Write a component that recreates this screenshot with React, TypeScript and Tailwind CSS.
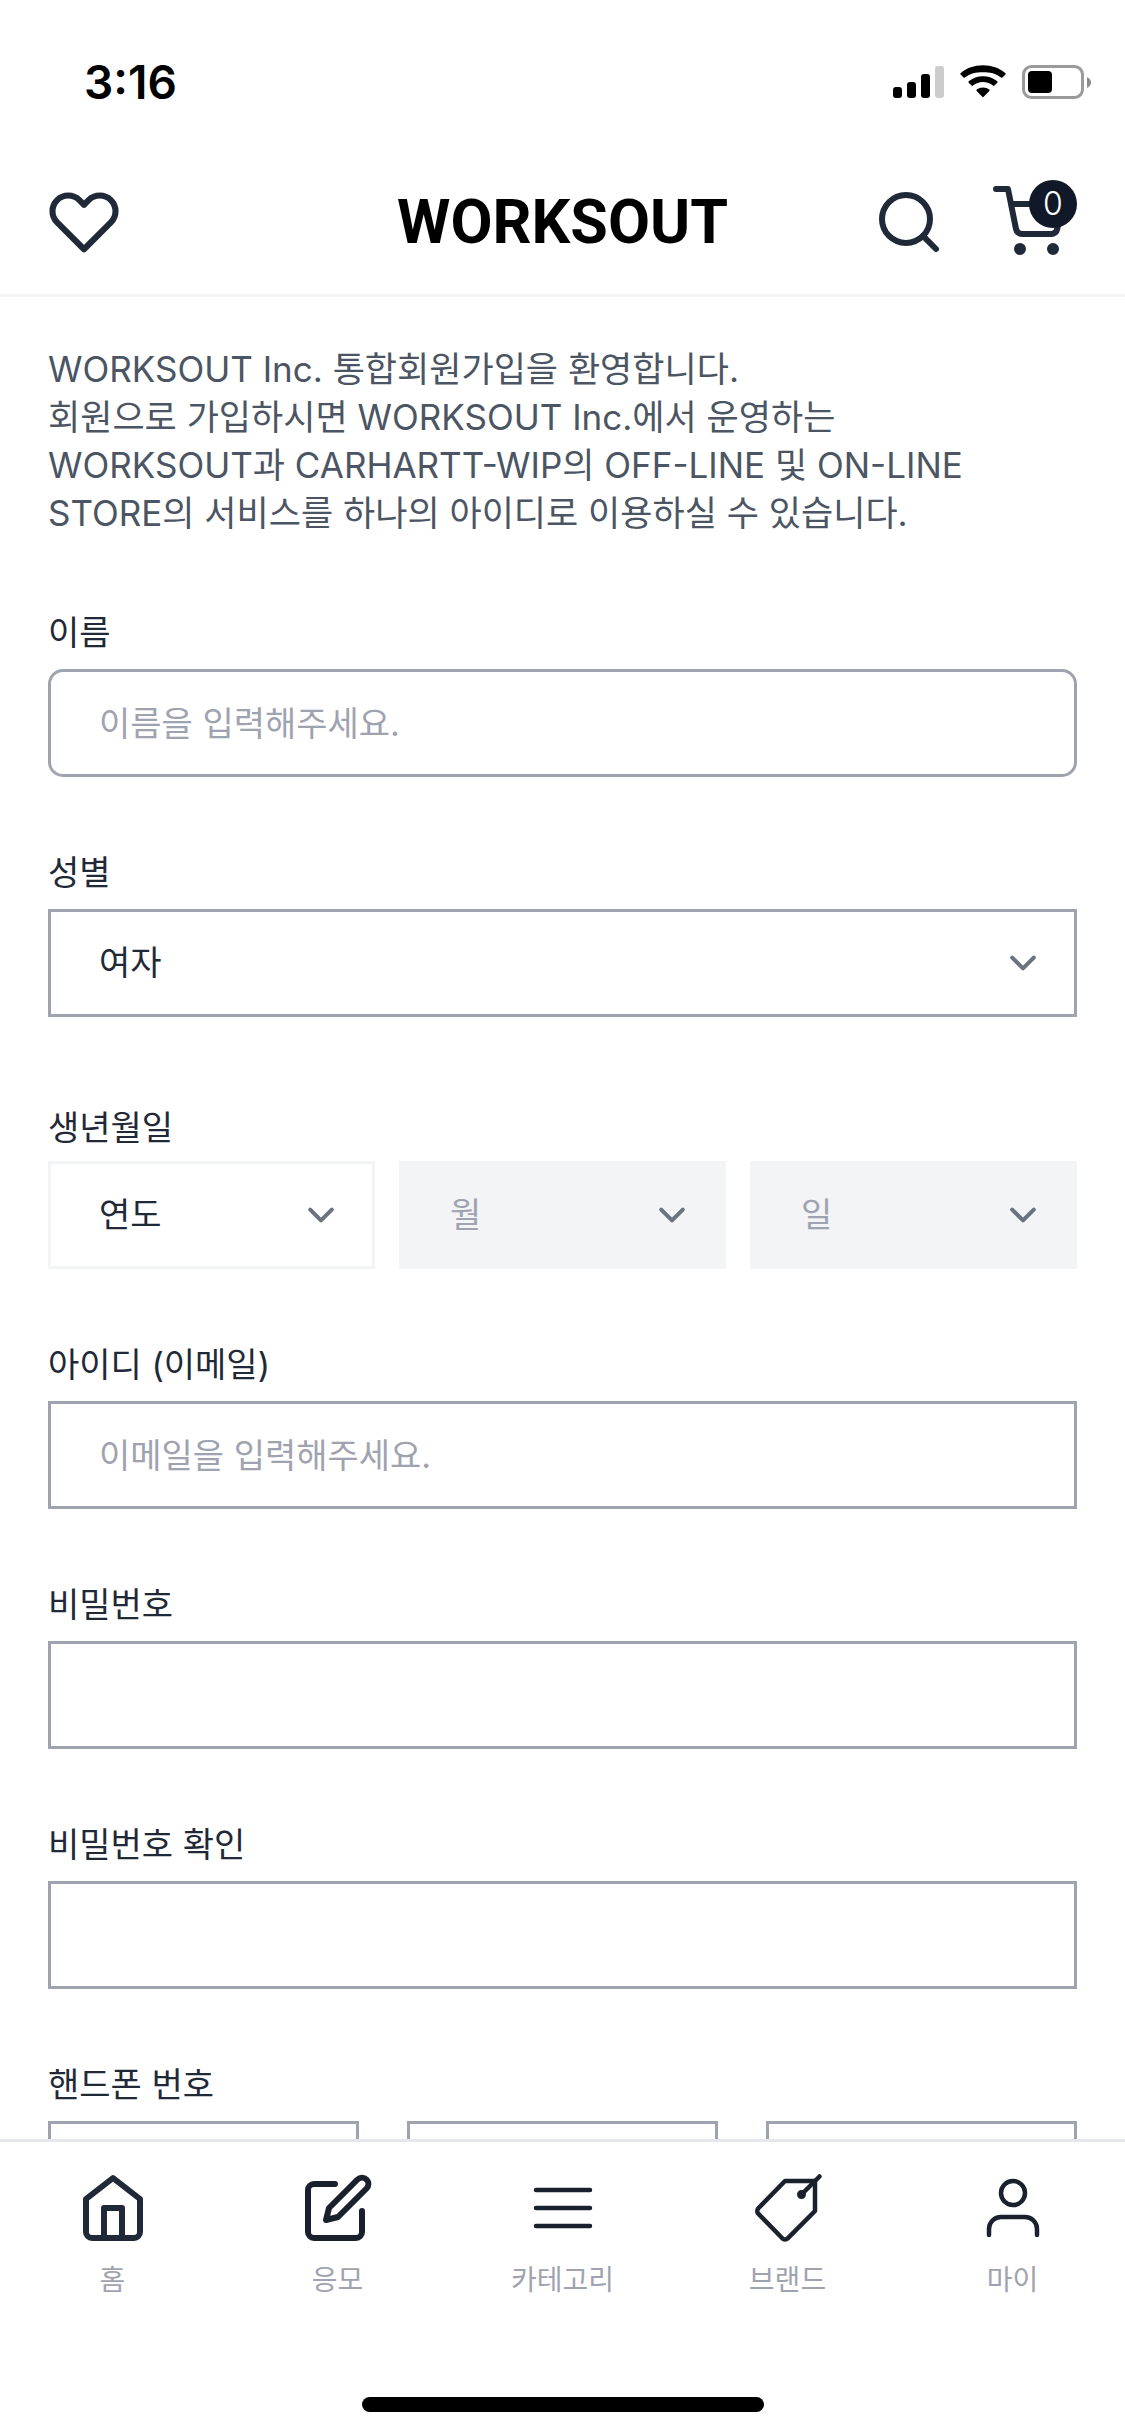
import type { ReactNode } from "react";

const strokeProps = {
  fill: "none",
  stroke: "currentColor",
  strokeLinecap: "round",
  strokeLinejoin: "round",
} as const;

function StatusBar() {
  return (
    <div className="flex h-[150px] shrink-0 items-start justify-between pt-[54px] pr-[34px] pl-[84px] text-black">
      <time className="text-[46px] leading-[56px] font-semibold">3:16</time>
      <div className="flex h-14 items-center gap-4">
        <svg width="51" height="32" viewBox="0 0 51 32" aria-label="신호 세기">
          <rect x="0" y="21" width="9" height="11" rx="3" />
          <rect x="14" y="16" width="9" height="16" rx="3" />
          <rect x="28" y="8" width="9" height="24" rx="3" />
          <rect x="42" y="0" width="9" height="32" rx="3" fill="#cccccc" />
        </svg>
        <svg width="46" height="34" viewBox="0 0 46 34" aria-label="와이파이">
          <path d="M0.6 9.6a1 1 0 0 1 0-1.4C6.6 3 14.4 0.3 23 0.3s16.4 2.7 22.4 7.9a1 1 0 0 1 0 1.4l-2.9 2.9a1 1 0 0 1-1.4 0C36 8.4 29.8 7.2 23 7.2S10 8.4 4.9 12.5a1 1 0 0 1-1.4 0z" />
          <path d="M8.7 17.7a1 1 0 0 1 0-1.4c3.9-3.3 8.8-5.1 14.3-5.1s10.4 1.8 14.3 5.1a1 1 0 0 1 0 1.4l-2.9 2.9a1 1 0 0 1-1.4 0c-2.8-2.3-6.2-3.6-10-3.6s-7.2 1.3-10 3.6a1 1 0 0 1-1.4 0z" />
          <path d="M16.7 25.9a1 1 0 0 1 0-1.4c1.7-1.3 3.9-2.1 6.3-2.1s4.6.8 6.3 2.1a1 1 0 0 1 0 1.4l-5.6 5.9a1 1 0 0 1-1.4 0z" />
        </svg>
        <svg width="69" height="34" viewBox="0 0 69 34" aria-label="배터리">
          <rect x="1.5" y="1.5" width="59" height="31" rx="8" fill="none" stroke="#9a9a9a" strokeWidth="3" />
          <rect x="6" y="6" width="24" height="22" rx="4" />
          <path d="M65 12v11c2.4-1 4-3 4-5.5S67.4 13 65 12z" fill="#8c8c8c" />
        </svg>
      </div>
    </div>
  );
}

function Header() {
  return (
    <header className="grid h-[147px] shrink-0 grid-cols-[1fr_auto_1fr] items-center border-b-3 border-[#f3f4f6] px-12 text-[#1f2937]">
      <button type="button" aria-label="위시리스트" className="-ml-1.5 justify-self-start pb-1">
        <svg className="size-[84px]" viewBox="0 0 24 24" {...strokeProps} strokeWidth="1.75">
          <path d="M4.318 6.318a4.5 4.5 0 0 0 0 6.364L12 20.364l7.682-7.682a4.5 4.5 0 0 0-6.364-6.364L12 7.636l-1.318-1.318a4.5 4.5 0 0 0-6.364 0z" />
        </svg>
      </button>
      <a href="#" className="font-[Roboto] text-[61px] leading-[60px] font-bold text-black">
        WORKSOUT
      </a>
      <div className="flex gap-12 justify-self-end">
        <button type="button" aria-label="검색">
          <svg className="size-[72px]" viewBox="0 0 24 24" {...strokeProps} strokeWidth="2">
            <circle cx="11" cy="11" r="8" />
            <path d="m21 21-4.35-4.35" />
          </svg>
        </button>
        <button type="button" aria-label="장바구니" className="relative pr-3">
          <svg className="size-[72px]" viewBox="0 0 24 24" {...strokeProps} strokeWidth="2">
            <circle cx="9" cy="21" r="1" fill="currentColor" />
            <circle cx="20" cy="21" r="1" fill="currentColor" />
            <path d="M1 1h4l2.68 13.39a2 2 0 0 0 2 1.61h9.72a2 2 0 0 0 2-1.61L23 6H6" />
          </svg>
          <span className="absolute -top-1.5 right-0 flex size-12 items-center justify-center rounded-full bg-[#111827] text-[32px] leading-none font-light text-white">
            0
          </span>
        </button>
      </div>
    </header>
  );
}

function Field({
  id,
  label,
  type = "text",
  placeholder,
  rounded = false,
}: {
  id: string;
  label: string;
  type?: string;
  placeholder?: string;
  rounded?: boolean;
}) {
  return (
    <div className="flex flex-col gap-3">
      <label htmlFor={id}>{label}</label>
      <input
        id={id}
        type={type}
        placeholder={placeholder}
        className={
          "h-27 w-full border-3 border-[#9fa3af] bg-white px-12 placeholder:text-[#9fa3af] " +
          (rounded ? "rounded-[15px]" : "")
        }
      />
    </div>
  );
}

function Select({
  id,
  label,
  value,
  look,
  disabled = false,
}: {
  id?: string;
  label?: string;
  value: string;
  look: string;
  disabled?: boolean;
}) {
  return (
    <div className="relative min-w-0 flex-1">
      <select
        id={id}
        aria-label={label}
        disabled={disabled}
        className={"h-27 w-full appearance-none rounded-none border-3 px-12 opacity-100 " + look}
      >
        <option>{value}</option>
      </select>
      <svg
        className="pointer-events-none absolute top-[27px] right-[27px] size-[54px] text-[#6b7280]"
        viewBox="0 0 20 20"
        {...strokeProps}
        strokeWidth="1.5"
      >
        <path d="m6 8 4 4 4-4" />
      </svg>
    </div>
  );
}

function SignUpForm() {
  return (
    <form className="flex flex-col gap-18 pt-18">
      <Field id="name" label="이름" placeholder="이름을 입력해주세요." rounded />

      <div className="flex flex-col gap-3 pb-[15px]">
        <label htmlFor="gender">성별</label>
        <Select id="gender" value="여자" look="border-[#9fa3af] bg-white" />
      </div>

      <fieldset className="flex flex-col">
        <legend className="pb-[9px]">생년월일</legend>
        <div className="flex gap-6">
          <Select label="연도" value="연도" look="border-[#f3f4f6] bg-white" />
          <Select label="월" value="월" look="border-[#f3f4f6] bg-[#f3f4f6] text-[#9fa3af]" disabled />
          <Select label="일" value="일" look="border-[#f3f4f6] bg-[#f3f4f6] text-[#9fa3af]" disabled />
        </div>
      </fieldset>

      <Field id="email" label="아이디 (이메일)" type="email" placeholder="이메일을 입력해주세요." />
      <Field id="password" label="비밀번호" type="password" />
      <Field id="password-confirm" label="비밀번호 확인" type="password" />

      <fieldset className="pb-18">
        <legend className="pb-3">핸드폰 번호</legend>
        <div className="grid grid-cols-3 gap-12">
          {["앞자리", "가운데 자리", "끝자리"].map((part) => (
            <input
              key={part}
              type="tel"
              aria-label={"핸드폰 번호 " + part}
              className="h-27 w-full min-w-0 border-3 border-[#9fa3af] px-12"
            />
          ))}
        </div>
      </fieldset>
    </form>
  );
}

const tabs: { label: string; width: string; color: string; icon: ReactNode }[] = [
  {
    label: "홈",
    width: "2",
    color: "text-[#1f2937]",
    icon: (
      <>
        <path d="m3 9 9-7 9 7v11a2 2 0 0 1-2 2H5a2 2 0 0 1-2-2z" />
        <path d="M9 22V12h6v10" />
      </>
    ),
  },
  {
    label: "응모",
    width: "2",
    color: "text-[#1a202c]",
    icon: (
      <>
        <path d="M11 4H4a2 2 0 0 0-2 2v14a2 2 0 0 0 2 2h14a2 2 0 0 0 2-2v-7" />
        <path d="M18.5 2.5a2.121 2.121 0 0 1 3 3L12 15l-4 1 1-4z" />
      </>
    ),
  },
  {
    label: "카테고리",
    width: "1.5",
    color: "text-[#1a202c]",
    icon: <path d="M3 6h18M3 12h18M3 18h18" />,
  },
  {
    label: "브랜드",
    width: "1.5",
    color: "text-[#1a202c]",
    icon: (
      <>
        <path d="M11 3h10v10l-9.1 9.1a1.3 1.3 0 0 1-1.8 0L2.2 14a1.3 1.3 0 0 1 0-2z" />
        <path d="m16.5 7.5 6-6" />
        <circle cx="16.5" cy="7.5" r="0.75" fill="currentColor" />
      </>
    ),
  },
  {
    label: "마이",
    width: "1.5",
    color: "text-[#1a202c]",
    icon: (
      <>
        <circle cx="12" cy="7" r="4" />
        <path d="M20 21v-2a4 4 0 0 0-4-4H8a4 4 0 0 0-4 4v2" />
      </>
    ),
  },
];

function TabBar() {
  return (
    <nav className="flex shrink-0 flex-col border-t-3 border-[#e5e7eb] bg-white pt-[30px] pb-6">
      <div className="grid grid-cols-5">
        {tabs.map((tab) => (
          <a key={tab.label} href="#" className="flex flex-col items-center gap-[18px]">
            <svg
              className={"size-[72px] " + tab.color}
              viewBox="0 0 24 24"
              {...strokeProps}
              strokeWidth={tab.width}
            >
              {tab.icon}
            </svg>
            <span className="text-[28px] leading-9 text-[#9fa3af]">{tab.label}</span>
          </a>
        ))}
      </div>
      <div className="mt-[99px] h-[15px] w-[402px] self-center rounded-full bg-black" />
    </nav>
  );
}

export default function App() {
  return (
    <div className="flex h-screen flex-col bg-white font-[Inter,'Noto_Sans_CJK_KR',sans-serif] text-[34px] leading-12 text-[#1f2937]">
      <StatusBar />
      <Header />
      <main className="min-h-0 flex-1 overflow-y-auto px-12 pt-12 [scrollbar-width:none]">
        <p className="text-[35px] leading-12 text-[#4b5563]">
          WORKSOUT Inc. 통합회원가입을 환영합니다.
          <br />
          회원으로 가입하시면 WORKSOUT Inc.에서 운영하는
          <br />
          WORKSOUT과 CARHARTT-WIP의 OFF-LINE 및 ON-LINE
          <br />
          STORE의 서비스를 하나의 아이디로 이용하실 수 있습니다.
        </p>
        <SignUpForm />
      </main>
      <TabBar />
    </div>
  );
}
